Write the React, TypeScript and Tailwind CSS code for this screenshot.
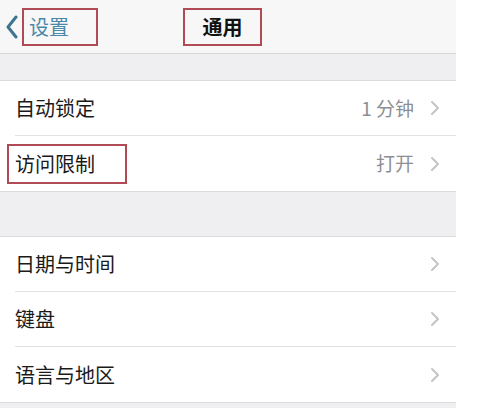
const font = { fontFamily: '"Noto Sans CJK SC", "Noto Sans", sans-serif' };

function Chevron() {
  return (
    <svg width="10" height="16" viewBox="0 0 10 16" className="shrink-0">
      <path d="M2 2 L8 8 L2 14" fill="none" stroke="#c4c4c8" strokeWidth="2" strokeLinecap="round" strokeLinejoin="round" />
    </svg>
  );
}

interface RowProps {
  label: string;
  value?: string;
  boxed?: boolean;
  last?: boolean;
}

function Row({ label, value, boxed, last }: RowProps) {
  return (
    <div className="bg-white pl-[15px]">
      <div className={`flex h-[55px] items-center pr-[16px] ${last ? "" : "border-b border-[#e2e2e4]"}`}>
        <div className="flex-1">
          <span
            className={`inline-flex items-center text-[20px] text-[#1a1a1a] ${
              boxed ? "-ml-[8px] h-[40px] w-[120px] border-2 border-[#b04a55] pl-[6px]" : ""
            }`}
          >
            {label}
          </span>
        </div>
        {value && <span className="mr-[16px] text-[19px] text-[#8e8e93]">{value}</span>}
        <Chevron />
      </div>
    </div>
  );
}

export default function App() {
  return (
    <div className="h-[408px] w-[477px] overflow-hidden bg-white" style={font}>
      <div className="w-[456px] bg-[#efeff1]">
        <div className="relative flex h-[54px] items-center border-b border-[#d6d6d8] bg-[#f7f7f7]">
          <svg width="14" height="24" viewBox="0 0 14 24" className="ml-[5px] shrink-0">
            <path d="M11 2 L3 12 L11 22" fill="none" stroke="#3d7591" strokeWidth="3" strokeLinecap="round" strokeLinejoin="round" />
          </svg>
          <span className="ml-[3px] flex h-[38px] w-[76px] items-center border-2 border-[#b04a55] pl-[5px] text-[20px] text-[#4a88ab]">
            设置
          </span>
          <span className="ml-[85px] flex h-[38px] w-[79px] items-center justify-center border-2 border-[#b04a55] text-[20px] font-bold text-[#111]">
            通用
          </span>
        </div>
        <div className="h-[26px]" />
        <div className="border-y border-[#dcdcde]">
          <Row label="自动锁定" value="1 分钟" />
          <Row label="访问限制" value="打开" boxed last />
        </div>
        <div className="h-[44px]" />
        <div className="border-y border-[#dcdcde]">
          <Row label="日期与时间" />
          <Row label="键盘" />
          <Row label="语言与地区" last />
        </div>
        <div className="h-[10px]" />
      </div>
    </div>
  );
}
